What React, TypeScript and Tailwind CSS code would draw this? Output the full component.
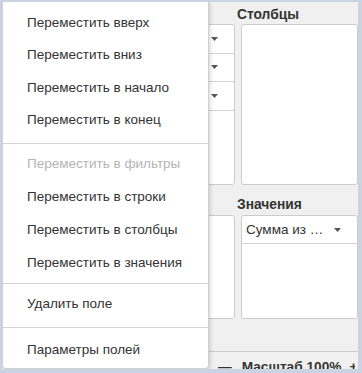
import React from "react";

const Arrow = () => (
  <svg width="7" height="4" viewBox="0 0 7 4" className="shrink-0">
    <polygon points="0,0 7,0 3.5,4" fill="#555" />
  </svg>
);

const FieldRow = ({ h }: { h: string }) => (
  <div className={`${h} flex items-center justify-end pl-[4px] pr-[16px] border-b border-[#d4d4d4]`}>
    <Arrow />
  </div>
);

const MenuItem = ({ label, disabled, h }: { label: string; disabled?: boolean; h: string }) => (
  <div className={`${h} flex items-center pl-[24px] whitespace-nowrap text-[13.5px] ${disabled ? "text-[#b4b4b4]" : "text-[#333]"}`}>
    {label}
  </div>
);

export default function App() {
  return (
    <div className="w-[362px] h-[373px] bg-[#c8d4e4] pt-[2px] pl-[2px] pr-[4px] pb-[4px] font-['Liberation_Sans',Arial,sans-serif]">
      <div className="relative w-full h-full bg-[#f0f0f0] overflow-hidden text-[13.5px] text-[#333] leading-[15px]">
        <div className="flex h-[317px]">
          <div className="w-[233px] flex flex-col pl-[112px]">
            <div className="h-[22px]" />
            <div className="h-[161px] ml-[4px] bg-white border border-[#cccccc] rounded-[3px] overflow-hidden">
              <FieldRow h="h-[28.5px]" />
              <FieldRow h="h-[28.5px]" />
              <FieldRow h="h-[28.5px]" />
            </div>
            <div className="h-[30px]" />
            <div className="h-[104px] ml-[4px] bg-white border border-[#cccccc] rounded-[3px]" />
          </div>
          <div className="w-[2px]" />
          <div className="flex-1 flex flex-col">
            <div className="h-[22px] pt-[4.5px] font-bold text-[13.8px]">Столбцы</div>
            <div className="h-[161px] ml-[4px] bg-white border border-[#cccccc] rounded-[3px]" />
            <div className="h-[30px] flex items-end pb-[3px] font-bold text-[13.8px]">Значения</div>
            <div className="h-[104px] ml-[4px] bg-white border border-[#cccccc] rounded-[3px] overflow-hidden">
              <div className="h-[28px] flex items-center justify-between pl-[4px] pr-[16px] border-b border-[#d4d4d4]">
                <span className="whitespace-nowrap">Сумма из …</span>
                <Arrow />
              </div>
            </div>
          </div>
        </div>
        <div className="h-[33px] border-b border-[#cccccc]" />
        <div className="w-[353px] overflow-hidden flex pl-[216px] pt-[6.5px] font-bold text-[13.7px] whitespace-nowrap">
          <span>—</span>
          <span className="ml-[10px]">Масштаб 100%</span>
          <span className="ml-[8px]">+</span>
        </div>

        <div className="absolute left-0 top-0 w-[207px] h-[367px] bg-white border-l border-r border-b border-[#d0d0d0] rounded-b-[4px] shadow-[1px_1px_4px_rgba(0,0,0,0.18)] pt-[4px] flex flex-col">
          <MenuItem h="h-[32.5px]" label="Переместить вверх" />
          <MenuItem h="h-[32.5px]" label="Переместить вниз" />
          <MenuItem h="h-[32.5px]" label="Переместить в начало" />
          <MenuItem h="h-[32.5px]" label="Переместить в конец" />
          <div className="mt-[6.5px] mb-[3px] h-px bg-[#d4d4d4]" />
          <MenuItem h="h-[33px]" label="Переместить в фильтры" disabled />
          <MenuItem h="h-[33px]" label="Переместить в строки" />
          <MenuItem h="h-[33px]" label="Переместить в столбцы" />
          <MenuItem h="h-[33px]" label="Переместить в значения" />
          <div className="mt-[4px] mb-[3px] h-px bg-[#d4d4d4]" />
          <MenuItem h="h-[33px]" label="Удалить поле" />
          <div className="mt-[7px] mb-[5px] h-px bg-[#d4d4d4]" />
          <MenuItem h="h-[33px]" label="Параметры полей" />
        </div>
      </div>
    </div>
  );
}
